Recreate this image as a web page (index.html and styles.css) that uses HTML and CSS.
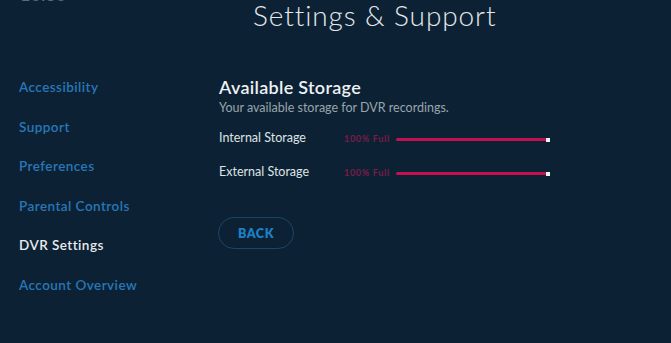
FILE: index.html
```html
<!DOCTYPE html>
<html lang="en">
<head>
<meta charset="utf-8">
<title>Settings &amp; Support</title>
<link rel="stylesheet" href="styles.css">
</head>
<body>
<div class="screen">
  <header class="top">
    <span class="clock">10:30</span>
    <h1 class="title">Settings &amp; Support</h1>
  </header>
  <div class="main">
    <nav class="menu">
      <a class="menu-item">Accessibility</a>
      <a class="menu-item">Support</a>
      <a class="menu-item">Preferences</a>
      <a class="menu-item">Parental Controls</a>
      <a class="menu-item active">DVR Settings</a>
      <a class="menu-item">Account Overview</a>
    </nav>
    <section class="panel">
      <h2 class="panel-title">Available Storage</h2>
      <p class="panel-sub">Your available storage for DVR recordings.</p>
      <div class="rows">
        <div class="row">
          <span class="row-label">Internal Storage</span>
          <span class="row-value">100% Full</span>
          <span class="bar"><span class="bar-fill" style="width:100%"></span></span>
        </div>
        <div class="row">
          <span class="row-label">External Storage</span>
          <span class="row-value">100% Full</span>
          <span class="bar"><span class="bar-fill" style="width:100%"></span></span>
        </div>
      </div>
      <button class="back">BACK</button>
    </section>
  </div>
</div>
</body>
</html>
```

FILE: styles.css
```css
* { box-sizing: border-box; }
html, body {
  margin: 0;
  padding: 0;
  background: #0c2234;
}
body {
  font-family: Lato, "Open Sans", sans-serif;
  color: #e6e9ec;
  width: 671px;
  height: 343px;
  overflow: hidden;
}
.screen {
  width: 671px;
  height: 343px;
}
.top {
  display: flex;
  align-items: flex-start;
  padding-left: 20px;
}
.clock {
  flex: 0 0 233px;
  margin-top: -15px;
  font-size: 18px;
  line-height: 18px;
  color: #5d6c78;
}
.title {
  margin: 0;
  font-size: 28px;
  line-height: 30px;
  font-weight: 300;
  color: #e4e8eb;
  letter-spacing: 0.9px;
}
.main {
  display: flex;
  margin-top: 47px;
}
.menu {
  flex: 0 0 219px;
  padding-left: 19px;
  display: flex;
  flex-direction: column;
  gap: 19.5px;
}
.menu-item {
  display: block;
  font-size: 13.5px;
  line-height: 20px;
  font-weight: 600;
  color: #2877b9;
  letter-spacing: 0.45px;
}
.menu-item.active {
  color: #e8ebee;
}
.panel {
  flex: 1;
  display: flex;
  flex-direction: column;
  align-items: flex-start;
}
.panel-title {
  margin: 0;
  font-size: 18px;
  line-height: 20px;
  font-weight: 600;
  letter-spacing: 0.3px;
  color: #eef1f3;
}
.panel-sub {
  margin: 2.5px 0 0;
  font-size: 12.5px;
  line-height: 15px;
  color: #9aa4ad;
}
.rows {
  margin-top: 15.5px;
  display: flex;
  flex-direction: column;
  gap: 18px;
}
.row {
  display: flex;
  align-items: center;
  height: 16px;
}
.row-label {
  flex: 0 0 125px;
  font-size: 12.5px;
  line-height: 16px;
  color: #dfe3e6;
}
.row-value {
  flex: 0 0 52px;
  font-size: 9px;
  font-weight: 700;
  letter-spacing: 0.7px;
  color: #7c1a49;
}
.bar {
  display: block;
  width: 154px;
  height: 3.5px;
  margin-top: 3px;
  position: relative;
}
.bar-fill {
  display: block;
  height: 100%;
  background: #c3114f;
  border-radius: 2px;
}
.bar::after {
  content: "";
  position: absolute;
  right: 0;
  top: 0;
  width: 4px;
  height: 4px;
  background: #f2f2f2;
}
.back {
  margin-top: 37px;
  margin-left: -1px;
  width: 76px;
  height: 32px;
  border: 1.5px solid #1b4567;
  border-radius: 16px;
  background: transparent;
  font-family: Lato, "Open Sans", sans-serif;
  font-size: 12.5px;
  font-weight: 800;
  letter-spacing: 0.6px;
  color: #1f7fc6;
  padding: 0;
}
```
